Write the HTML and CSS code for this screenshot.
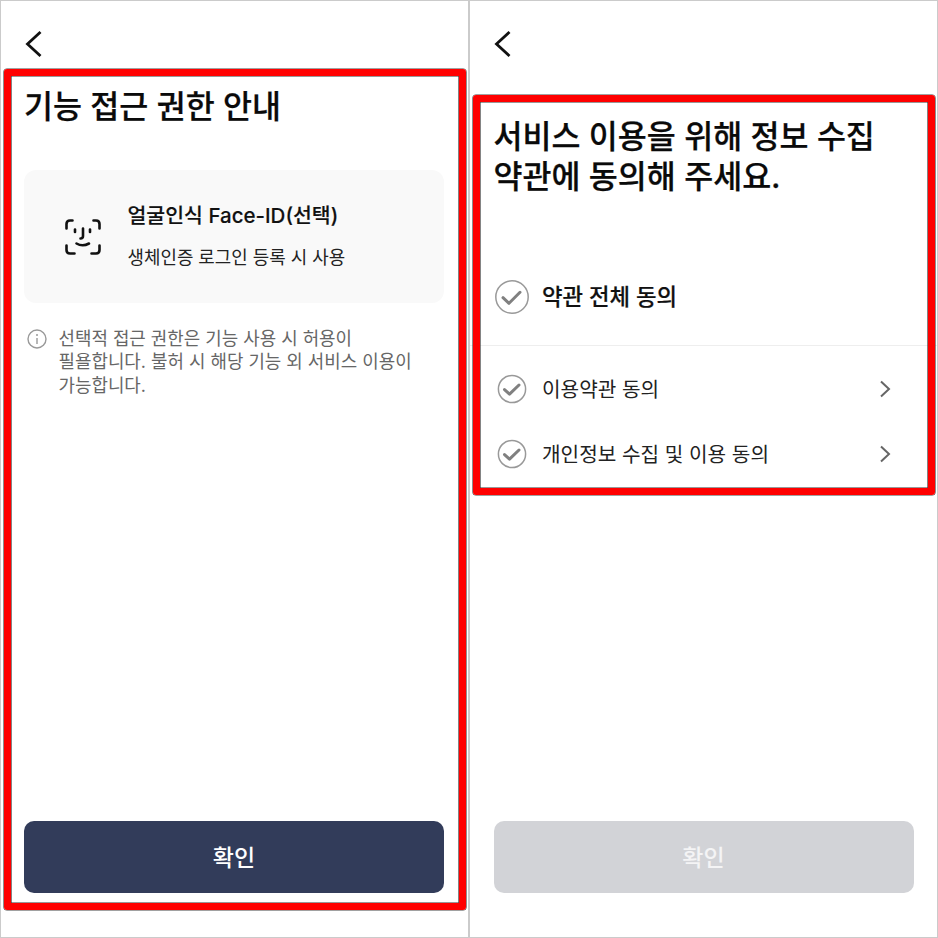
FILE: index.html
```html
<!DOCTYPE html>
<html lang="ko">
<head>
<meta charset="utf-8">
<title>기능 접근 권한 안내</title>
<link rel="stylesheet" href="styles.css">
</head>
<body>
<main class="page">
  <section class="screen">
    <header class="topbar">
      <svg class="back" viewBox="0 0 18 28" aria-hidden="true"><path d="M15.5 2 L2.5 14 L15.5 26"/></svg>
    </header>
    <h1 class="title">기능 접근 권한 안내</h1>
    <div class="card">
      <svg class="face" viewBox="0 0 36 36" aria-hidden="true">
        <path d="M1.5 9.5 V5 Q1.5 1.5 5 1.5 H7.5"/>
        <path d="M28.5 1.5 H31 Q34.5 1.5 34.5 5 V9.5"/>
        <path d="M1.5 26.5 V31 Q1.5 34.5 5 34.5 H9.5"/>
        <path d="M34.5 26.5 V31 Q34.5 34.5 31 34.5 H26.5"/>
        <path d="M10 10.5 V13"/>
        <path d="M25 10.5 V13"/>
        <path d="M18 9.5 V17 Q18 19.5 15.5 19.5"/>
        <path d="M11.5 24.5 Q17.5 28 24 24.5"/>
      </svg>
      <div class="card-text">
        <p class="card-title">얼굴인식 Face-ID(선택)</p>
        <p class="card-sub">생체인증 로그인 등록 시 사용</p>
      </div>
    </div>
    <div class="note">
      <svg class="info" viewBox="0 0 20 20" aria-hidden="true">
        <circle cx="10" cy="10" r="9"/>
        <path d="M10 9 V15"/>
        <circle class="info-dot" cx="10" cy="6" r="1"/>
      </svg>
      <p class="note-text">선택적 접근 권한은 기능 사용 시 허용이<br>필욜합니다. 불허 시 해당 기능 외 서비스 이용이<br>가능합니다.</p>
    </div>
    <button class="confirm confirm-active" type="button">확인</button>
  </section>

  <section class="screen screen-terms">
    <header class="topbar">
      <svg class="back" viewBox="0 0 18 28" aria-hidden="true"><path d="M15.5 2 L2.5 14 L15.5 26"/></svg>
    </header>
    <h1 class="title title-terms">서비스 이용을 위해 정보 수집<br>약관에 동의해 주세요.</h1>
    <div class="agree-all">
      <span class="check-slot">
        <svg class="check check-lg" viewBox="0 0 36 36" aria-hidden="true"><circle cx="18" cy="18" r="16.2"/><path d="M9 18.7 L15 24.3 L26 13.3"/></svg>
      </span>
      <span class="agree-all-label">약관 전체 동의</span>
    </div>
    <ul class="terms">
      <li class="term">
        <span class="check-slot">
          <svg class="check check-sm" viewBox="0 0 30 30" aria-hidden="true"><circle cx="15" cy="15" r="13.6"/><path d="M7.5 15.6 L12.5 20.2 L22 11"/></svg>
        </span>
        <span class="term-label">이용약관 동의</span>
        <svg class="chevron" viewBox="0 0 24 24" aria-hidden="true"><path d="M8 4.5 L16 12 L8 19.5"/></svg>
      </li>
      <li class="term">
        <span class="check-slot">
          <svg class="check check-sm" viewBox="0 0 30 30" aria-hidden="true"><circle cx="15" cy="15" r="13.6"/><path d="M7.5 15.6 L12.5 20.2 L22 11"/></svg>
        </span>
        <span class="term-label">개인정보 수집 및 이용 동의</span>
        <svg class="chevron" viewBox="0 0 24 24" aria-hidden="true"><path d="M8 4.5 L16 12 L8 19.5"/></svg>
      </li>
    </ul>
    <button class="confirm confirm-disabled" type="button">확인</button>
  </section>

  <div class="highlight highlight-left"></div>
  <div class="highlight highlight-right"></div>
</main>
</body>
</html>
```
FILE: styles.css
```css
* { box-sizing: border-box; }
html, body { margin: 0; padding: 0; background: #fff; }
body { font-family: Inter, "Noto Sans CJK KR", sans-serif; color: #111; }
p, h1, ul { margin: 0; padding: 0; }
ul { list-style: none; }

.page {
  position: relative;
  display: flex;
  width: 938px;
  height: 938px;
}
.screen {
  display: flex;
  flex-direction: column;
  width: 469px;
  height: 938px;
  padding: 0 24px 44px 23px;
  border: 1px solid #cbcbcb;
}
.screen-terms { padding: 0 23.5px 44px; }
.topbar {
  display: flex;
  align-items: center;
  height: 86px;
}
.back {
  width: 18px;
  height: 28px;
  margin-left: 0.5px;
  fill: none;
  stroke: #111;
  stroke-width: 2.8;
}
.title {
  font-size: 31.5px;
  font-weight: 500;
  line-height: 40px;
  letter-spacing: 0;
  color: #0a0a0a;
  -webkit-text-stroke: 0.25px #0a0a0a;
}
.title-terms { margin-top: 30px; }

.card {
  display: flex;
  align-items: center;
  gap: 27px;
  height: 133px;
  margin-top: 43px;
  padding-left: 40.5px;
  background: #f9f9f9;
  border-radius: 12px;
}
.face {
  flex: none;
  width: 36px;
  height: 36px;
  fill: none;
  stroke: #111;
  stroke-width: 2.6;
  stroke-linecap: round;
}
.card-title {
  font-size: 20.5px;
  font-weight: 500;
  line-height: 30px;
  -webkit-text-stroke: 0.15px #111;
}
.card-sub {
  margin-top: 12px;
  font-size: 17.9px;
  line-height: 30px;
  color: #222;
}

.note {
  display: flex;
  gap: 12px;
  margin-top: 24px;
  padding-left: 2.5px;
}
.info {
  flex: none;
  width: 20px;
  height: 20px;
  margin-top: 2px;
  fill: none;
  stroke: #999;
  stroke-width: 1.4;
}
.info-dot { fill: #999; stroke: none; }
.note-text {
  font-size: 17.9px;
  line-height: 23.3px;
  color: #666;
}

.agree-all {
  display: flex;
  align-items: center;
  gap: 12.5px;
  height: 82px;
  margin: 67px -23.5px 0;
  padding: 0 23.5px 16px;
  border-bottom: 1px solid #eee;
}
.agree-all-label {
  font-size: 22.3px;
  font-weight: 500;
  line-height: 30px;
  -webkit-text-stroke: 0.2px #111;
}
.check-slot {
  display: flex;
  flex: none;
  align-items: center;
  justify-content: center;
  width: 36px;
}
.check {
  fill: none;
  stroke: #999;
}
.check circle { stroke-width: 1.5; }
.check path {
  stroke: #808080;
  stroke-width: 3;
  stroke-linecap: round;
  stroke-linejoin: round;
}
.check-lg { width: 36px; height: 36px; }
.check-sm { width: 30px; height: 30px; }

.terms { margin-top: 10.5px; }
.term {
  display: flex;
  align-items: center;
  gap: 12.5px;
  height: 65px;
  padding-right: 17px;
}
.term-label {
  flex: 1;
  padding-top: 2px;
  font-size: 20.2px;
  line-height: 30px;
  color: #222;
}
.chevron {
  flex: none;
  width: 24px;
  height: 24px;
  fill: none;
  stroke: #666;
  stroke-width: 2;
}

.confirm {
  width: 420px;
  height: 72px;
  margin-top: auto;
  padding: 0 0 3px;
  border: 0;
  border-radius: 10px;
  font-family: inherit;
  font-size: 23px;
  font-weight: 500;
  color: #fff;
}
.confirm-active { background: #323c5a; }
.confirm-disabled { background: #d2d3d7; color: #f4f4f5; }

.highlight {
  position: absolute;
  border: 7.5px solid #f00;
  border-radius: 3px;
  box-shadow: 0 0 0 0.6px #444, inset 0 0 0 0.6px #333;
}
.highlight-left { left: 3.5px; top: 68.5px; width: 462px; height: 841px; }
.highlight-right { left: 472.5px; top: 94.5px; width: 462px; height: 400px; }
```
